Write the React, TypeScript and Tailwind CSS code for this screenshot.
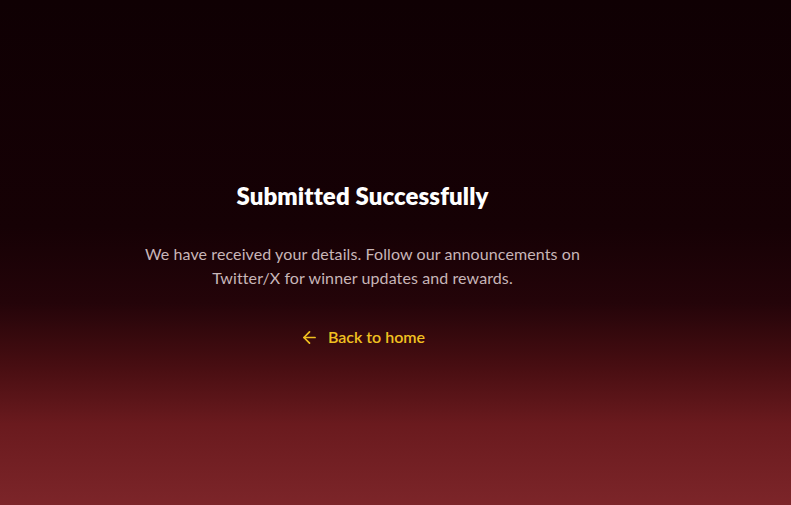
import { ArrowLeft } from 'lucide-react';

export default function App() {
  return (
    <div className="h-[505px] w-full overflow-hidden bg-[linear-gradient(180deg,#0f0003_0%,#160105_45%,#240409_60%,#460d11_72%,#6a1a1e_84%,#7c2529_100%)] font-['Lato',sans-serif]">
      <div className="flex flex-col items-center pr-[66px] pt-[181px] text-center">
        <h1 className="text-[24px] font-extrabold leading-[30px] tracking-[0.1px] text-white">
          Submitted Successfully
        </h1>
        <p className="mt-[31px] w-[450px] text-[16px] leading-[24px] tracking-[0.1px] text-[#c8b6b8]">
          We have received your details. Follow our announcements on Twitter/X for winner updates and rewards.
        </p>
        <button className="mt-[35px] flex items-center gap-[9px] text-[16px] font-semibold leading-[24px] text-[#f0c020]">
          <ArrowLeft className="h-[19px] w-[19px]" strokeWidth={2.2} />
          Back to home
        </button>
      </div>
    </div>
  );
}
